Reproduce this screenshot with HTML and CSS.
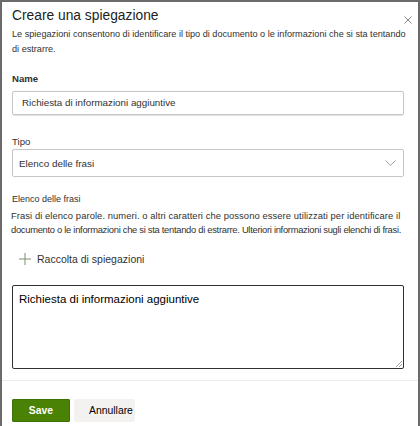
FILE: index.html
```html
<!DOCTYPE html>
<html lang="it">
<head>
<meta charset="utf-8">
<title>Creare una spiegazione</title>
<link rel="stylesheet" href="styles.css">
</head>
<body>
<div class="frame">
  <div class="header">
    <h1 class="title">Creare una spiegazione</h1>
    <span class="close" aria-label="Chiudi">
      <svg width="8" height="8" viewBox="0 0 8 8"><path d="M0.5 0.5L7.5 7.5M7.5 0.5L0.5 7.5" stroke="#8a8886" stroke-width="1" fill="none"/></svg>
    </span>
  </div>
  <p class="intro">Le spiegazioni consentono di identificare il tipo di documento o le informazioni che si sta tentando<br>di estrarre.</p>

  <div class="field name-field">
    <div class="label strong">Name</div>
    <div class="input">Richiesta di informazioni aggiuntive</div>
  </div>

  <div class="field tipo-field">
    <div class="label">Tipo</div>
    <div class="select">
      <span>Elenco delle frasi</span>
      <svg width="11" height="6" viewBox="0 0 11 6"><path d="M0.5 0.5L5.5 5.3L10.5 0.5" stroke="#a19f9d" stroke-width="1" fill="none"/></svg>
    </div>
  </div>

  <div class="phrases">
    <div class="label small">Elenco delle frasi</div>
    <p class="help"><span class="l1">Frasi di elenco parole. numeri. o altri caratteri che possono essere utilizzati per identificare il</span><br><span class="l2">documento o le informazioni che si sta tentando di estrarre. Ulteriori informazioni sugli elenchi di frasi.</span></p>
    <div class="add">
      <svg width="12" height="12" viewBox="0 0 12 12"><path d="M6 0V12M0 6H12" stroke="#7d9070" stroke-width="1" fill="none"/></svg>
      <span>Raccolta di spiegazioni</span>
    </div>
    <div class="textarea">Richiesta di informazioni aggiuntive
      <svg class="grip" width="7" height="7" viewBox="0 0 7 7"><path d="M7 1L1 7M7 4L4 7" stroke="#a19f9d" stroke-width="1"/></svg>
    </div>
  </div>

  <div class="footer">
    <button class="btn primary">Save</button>
    <button class="btn secondary">Annullare</button>
  </div>
</div>
</body>
</html>
```
FILE: styles.css
```css
html, body {
  margin: 0;
  padding: 0;
  background: #ffffff;
}
body {
  font-family: "Liberation Sans", Arial, sans-serif;
  color: #323130;
}
.frame {
  width: 420px;
  height: 426px;
  box-sizing: border-box;
  border: 2px solid #6b6b6b;
  border-bottom: 0;
  overflow: hidden;
}
.header {
  display: flex;
  justify-content: space-between;
  align-items: flex-start;
  padding: 4px 6px 0 10px;
}
.title {
  margin: 0;
  font-size: 13.8px;
  font-weight: normal;
  line-height: 20px;
  color: #201f1e;
}
.close {
  display: flex;
  margin-top: 10px;
}
.intro {
  margin: 1px 14px 0 10px;
  font-size: 9.15px;
  line-height: 15px;
  white-space: nowrap;
}
.field {
  padding: 0 14px 0 10px;
}
.name-field {
  margin-top: 15px;
}
.label {
  font-size: 9.6px;
  line-height: 14px;
}
.label.strong {
  font-weight: bold;
}
.input {
  margin-top: 5px;
  height: 24px;
  box-sizing: border-box;
  border: 1px solid #c8c6c4;
  border-radius: 2px;
  padding: 0 9px;
  font-size: 9.8px;
  line-height: 22px;
  box-shadow: 0 0.5px 1px rgba(0,0,0,0.12);
}
.tipo-field {
  margin-top: 20px;
}
.select {
  margin-top: 0;
  height: 28px;
  box-sizing: border-box;
  border: 1px solid #c8c6c4;
  border-radius: 2px;
  padding: 0 7px 0 6px;
  display: flex;
  align-items: center;
  justify-content: space-between;
  font-size: 9.9px;
}
.phrases {
  padding: 0 14px 0 10px;
  margin-top: 15px;
}
.label.small {
  font-size: 9px;
  line-height: 14px;
}
.help {
  margin: 3px 0 0 -1px;
  font-size: 9.4px;
  line-height: 14px;
  white-space: nowrap;
}
.help .l1 {
  letter-spacing: 0.08px;
}
.help .l2 {
  letter-spacing: -0.29px;
}
.add {
  display: flex;
  align-items: center;
  gap: 6px;
  margin-top: 15px;
  padding-left: 7px;
  font-size: 10.5px;
  line-height: 14px;
}
.textarea {
  position: relative;
  margin-top: 19px;
  height: 84px;
  box-sizing: border-box;
  border: 1px solid #323130;
  border-radius: 2px;
  padding: 5px 6px;
  font-size: 11.5px;
  line-height: 16px;
  color: #000;
}
.grip {
  position: absolute;
  right: 1px;
  bottom: 1px;
}
.footer {
  margin-top: 11px;
  border-top: 1px solid #edebe9;
  padding: 18px 10px 0;
  display: flex;
  gap: 4px;
}
.btn {
  height: 23px;
  border: 0;
  border-radius: 2px;
  font-family: "Liberation Sans", Arial, sans-serif;
  font-size: 10.4px;
  padding: 0;
  cursor: pointer;
}
.primary {
  width: 58px;
  background: #498205;
  color: #fff;
  font-weight: bold;
  box-shadow: inset 0 0 0 1px #3f7204;
}
.secondary {
  width: 61px;
  background: #f3f2f1;
  color: #000;
  text-align: left;
  padding-left: 15px;
}
```
